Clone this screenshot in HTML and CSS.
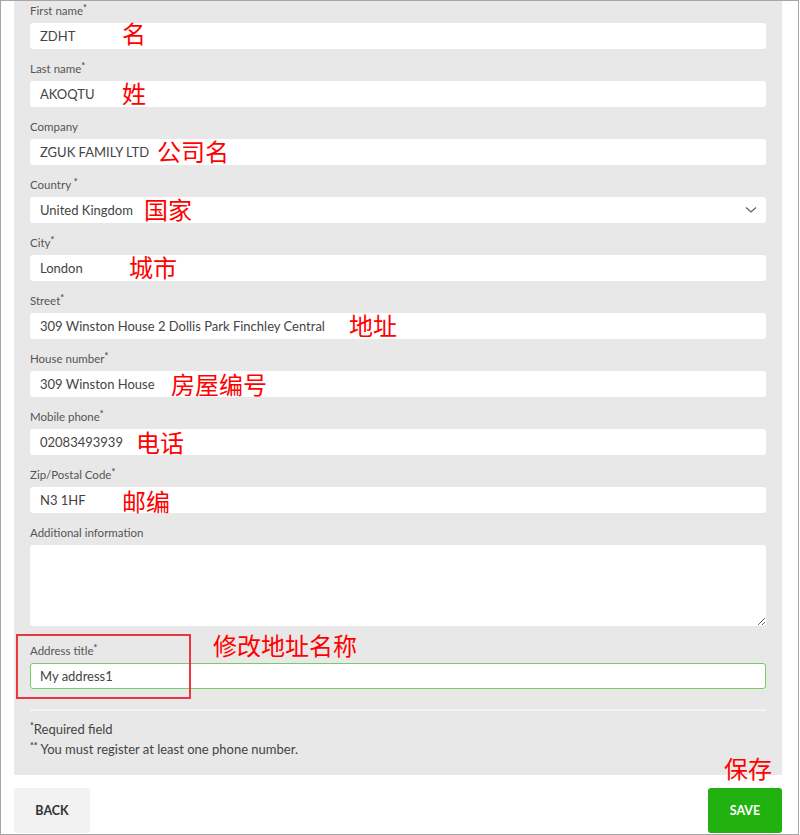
FILE: index.html
```html
<!DOCTYPE html>
<html lang="en">
<head>
  <meta charset="UTF-8">
  <title>Edit address</title>
  <link rel="stylesheet" href="styles.css">
</head>
<body>
<div class="frame">
  <form class="panel">
    <div class="field">
      <label class="field-label">First name<sup>*</sup></label>
      <input class="field-input" type="text" value="ZDHT">
      <span class="note note-first">名</span>
    </div>
    <div class="field">
      <label class="field-label">Last name<sup>*</sup></label>
      <input class="field-input" type="text" value="AKOQTU">
      <span class="note note-last">姓</span>
    </div>
    <div class="field">
      <label class="field-label">Company</label>
      <input class="field-input" type="text" value="ZGUK FAMILY LTD">
      <span class="note note-company">公司名</span>
    </div>
    <div class="field">
      <label class="field-label">Country <sup>*</sup></label>
      <div class="field-input field-select">
        <span>United Kingdom</span>
        <svg width="12" height="8" viewBox="0 0 12 8"><path d="M1 1.5 L6 6 L11 1.5" fill="none" stroke="#5a6470" stroke-width="1.3"/></svg>
      </div>
      <span class="note note-country">国家</span>
    </div>
    <div class="field">
      <label class="field-label">City<sup>*</sup></label>
      <input class="field-input" type="text" value="London">
      <span class="note note-city">城市</span>
    </div>
    <div class="field">
      <label class="field-label">Street<sup>*</sup></label>
      <input class="field-input" type="text" value="309 Winston House 2 Dollis Park Finchley Central">
      <span class="note note-street">地址</span>
    </div>
    <div class="field">
      <label class="field-label">House number<sup>*</sup></label>
      <input class="field-input" type="text" value="309 Winston House">
      <span class="note note-house">房屋编号</span>
    </div>
    <div class="field">
      <label class="field-label">Mobile phone<sup>*</sup></label>
      <input class="field-input" type="text" value="02083493939">
      <span class="note note-phone">电话</span>
    </div>
    <div class="field">
      <label class="field-label">Zip/Postal Code<sup>*</sup></label>
      <input class="field-input" type="text" value="N3 1HF">
      <span class="note note-zip">邮编</span>
    </div>
    <div class="field field-area">
      <label class="field-label">Additional information</label>
      <textarea class="field-input field-textarea"></textarea>
    </div>
    <div class="field field-title">
      <div class="mark-box"></div>
      <label class="field-label">Address title<sup>*</sup></label>
      <input class="field-input field-active" type="text" value="My address1">
      <span class="note note-title">修改地址名称</span>
    </div>
    <hr class="divider">
    <div class="legend">
      <p><sup>*</sup>Required field</p>
      <p><sup>**</sup> You must register at least one phone number.</p>
    </div>
  </form>
  <div class="actions">
    <button class="btn btn-back" type="button">BACK</button>
    <button class="btn btn-save" type="button">SAVE</button>
    <span class="note note-save">保存</span>
  </div>
</div>
</body>
</html>
```

FILE: styles.css
```css
html, body {
  margin: 0;
  padding: 0;
  background: #fff;
}
body {
  font-family: Lato, "Open Sans", Arial, sans-serif;
  color: #444;
}
.frame {
  position: relative;
  box-sizing: border-box;
  width: 799px;
  height: 835px;
  border: 1px solid #a6a6a6;
  overflow: hidden;
}
.panel {
  width: 768px;
  box-sizing: border-box;
  margin: 0 0 0 13px;
  padding: 2px 16px 16px;
  background: #e8e8e8;
}
.field {
  position: relative;
  display: flex;
  flex-direction: column;
  margin-bottom: 12px;
}
.field-label {
  font-size: 11.5px;
  line-height: 16px;
  color: #555;
  margin-bottom: 4px;
}
.field-label sup {
  font-size: 9px;
  font-weight: bold;
  line-height: 0;
  vertical-align: 4px;
}
.field-input {
  box-sizing: border-box;
  height: 26px;
  width: 100%;
  border: 0;
  border-radius: 3px;
  background: #fff;
  padding: 0 10px;
  font-family: Lato, "Open Sans", Arial, sans-serif;
  font-size: 13px;
  color: #444;
  outline: none;
  margin: 0;
}
.field-select {
  display: flex;
  align-items: center;
  justify-content: space-between;
  padding-right: 9px;
}
.field-area {
  margin-bottom: 17px;
}
.field-textarea {
  display: block;
  height: 81px;
  resize: vertical;
}
.field-title {
  margin-bottom: 20px;
}
.field-active {
  border: 1px solid #74cf63;
  padding-left: 9px;
}
.mark-box {
  position: absolute;
  left: -14px;
  top: -9px;
  width: 175px;
  height: 65px;
  box-sizing: border-box;
  border: 2px solid #e8383d;
}
.divider {
  margin: 0;
  border: 0;
  height: 2px;
  background: #f3f3f3;
}
.legend {
  margin-top: 8px;
  font-size: 13px;
  line-height: 20px;
  color: #444;
}
.legend p {
  margin: 0;
}
.legend sup {
  font-size: 9px;
  font-weight: bold;
  line-height: 0;
  vertical-align: 5px;
}
.actions {
  position: relative;
  width: 768px;
  margin: 13px 0 0 13px;
  display: flex;
  justify-content: space-between;
}
.btn {
  height: 45px;
  border: 0;
  border-radius: 3px;
  font-family: Lato, "Open Sans", Arial, sans-serif;
  font-size: 12.5px;
  font-weight: bold;
  cursor: pointer;
}
.btn-back {
  width: 76px;
  background: #f2f2f2;
  color: #333;
}
.btn-save {
  width: 74px;
  background: #22b20f;
  color: #fff;
}
.note {
  position: absolute;
  top: 20px;
  font-family: "Noto Sans CJK SC", sans-serif;
  font-size: 24px;
  line-height: 24px;
  color: #ff0000;
  white-space: nowrap;
}
.note-first { left: 92px; top: 18px; }
.note-last { left: 92px; }
.note-company { left: 127px; }
.note-country { left: 114px; }
.note-city { left: 99px; }
.note-street { left: 319px; }
.note-house { left: 141px; top: 21px; }
.note-phone { left: 106px; top: 21px; }
.note-zip { left: 92px; top: 22px; }
.note-title { left: 183px; top: -10px; }
.note-save { left: 710px; top: -32px; }
```
